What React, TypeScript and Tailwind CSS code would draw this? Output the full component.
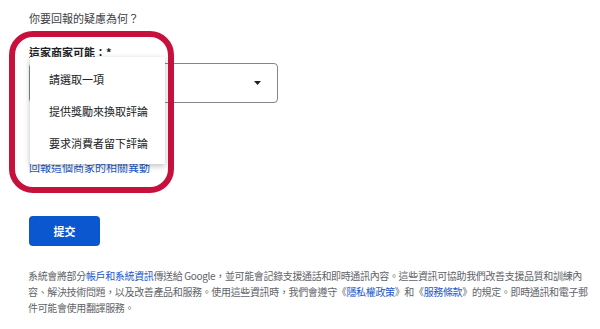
import React from "react";

export default function App() {
  return (
    <div className="relative w-[600px] h-[329px] overflow-hidden bg-white text-[#3c4043] font-['Noto_Sans_CJK_TC','Noto_Sans',sans-serif]">
      <div className="pl-[29px] pt-[10px]">
        <p className="text-[11px] leading-[16px] text-[#3c4043]">你要回報的疑慮為何？</p>
        <p className="mt-[18px] text-[11px] leading-[16px] font-bold text-[#202124]">這家商家可能：*</p>
        <div className="mt-[3px] flex h-[40px] w-[249px] items-center justify-end rounded-[4px] border border-[#80868b] pr-[16px]">
          <svg width="7" height="4" viewBox="0 0 7 4">
            <path d="M0 0 L7 0 L3.5 4 Z" fill="#202124" />
          </svg>
        </div>
        <p className="mt-[56px] text-[11px] leading-[16px] text-[#1a57c8]">回報這個商家的相關異動</p>
        <button className="mt-[41px] flex h-[30px] w-[71px] items-center justify-center rounded-[4px] bg-[#0b57d0] text-[11px] font-bold text-white">
          提交
        </button>
      </div>
      <div className="mt-[22px] pl-[28px] text-[10px] leading-[16px] tracking-[-0.35px] text-[#5f6368]">
        <p className="whitespace-nowrap">
          系統會將部分<span className="text-[#1a57c8]">帳戶和系統資訊</span>傳送給 Google，並可能會記錄支援通話和即時通訊內容。這些資訊可協助我們改善支援品質和訓練內
        </p>
        <p className="whitespace-nowrap">
          容、解決技術問題，以及改善產品和服務。使用這些資訊時，我們會遵守《<span className="text-[#1a57c8]">隱私權政策</span>》和《<span className="text-[#1a57c8]">服務條款</span>》的規定。即時通訊和電子郵
        </p>
        <p className="whitespace-nowrap">件可能會使用翻譯服務。</p>
      </div>

      {/* dropdown menu overlay */}
      <div className="absolute left-[30px] top-[57px] h-[107px] w-[135px] bg-white pt-[6px] shadow-[0_2px_6px_rgba(0,0,0,0.25)]">
        <div className="flex h-[32px] items-center pl-[19px] text-[11px] text-[#202124]">請選取一項</div>
        <div className="flex h-[32px] items-center pl-[19px] text-[11px] text-[#202124]">提供獎勵來換取評論</div>
        <div className="flex h-[32px] items-center pl-[19px] text-[11px] text-[#202124]">要求消費者留下評論</div>
      </div>

      {/* red annotation box */}
      <div className="pointer-events-none absolute left-[9px] top-[31px] h-[162px] w-[165px] rounded-[24px] border-[6px] border-[#c8103c]" />
    </div>
  );
}
